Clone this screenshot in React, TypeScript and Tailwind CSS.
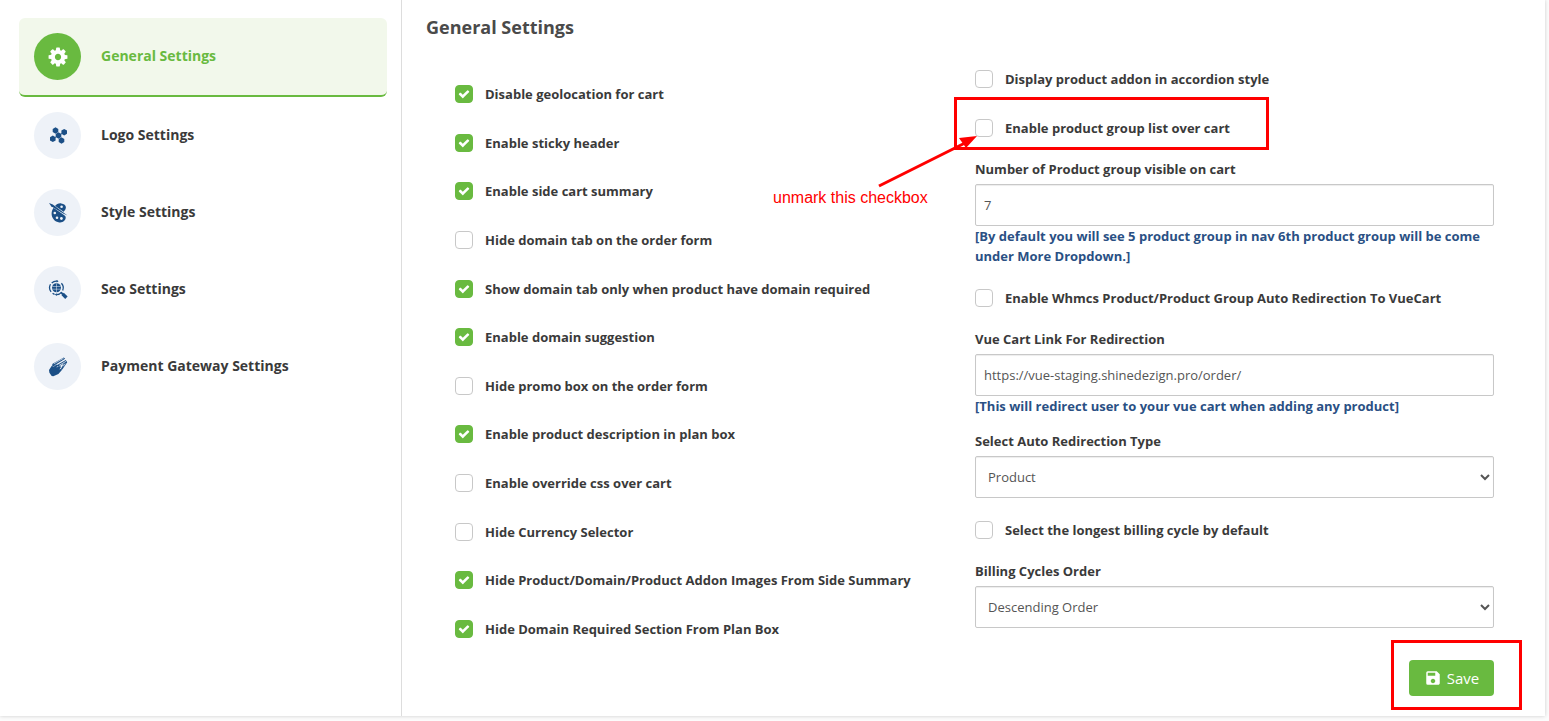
import type { ReactNode } from 'react'
import { useState } from 'react'
import { MdSave } from 'react-icons/md'

const GearIcon = () => (
  <svg className="h-[22px] w-[22px]" viewBox="0 0 1792 1792" fill="currentColor" aria-hidden="true">
    <path d="M1152 896q0-106-75-181t-181-75-181 75-75 181 75 181 181 75 181-75 75-181zm512-109v222q0 12-8 23t-20 13l-185 28q-19 54-39 91 35 50 107 138 10 12 10 25t-9 23q-27 37-99 108t-94 71q-12 0-26-9l-138-108q-44 23-91 38-16 136-29 186-7 28-36 28h-222q-14 0-24.5-8.5t-11.5-21.5l-28-184q-49-16-90-37l-141 107q-10 9-25 9-14 0-25-11-126-114-165-168-7-10-7-23 0-12 8-23 15-21 51-66.5t54-70.5q-27-50-41-99l-183-27q-13-2-21-12.5t-8-23.5v-222q0-12 8-23t19-13l186-28q14-46 39-92-40-57-107-138-10-12-10-24 0-10 9-23 26-36 98.5-107.5t94.5-71.5q13 0 26 10l138 107q44-23 91-38 16-136 29-186 7-28 36-28h222q14 0 24.5 8.500t11.500 21.500l28 184q49 16 90 37l142-107q9-9 24-9 13 0 25 10 129 119 165 170 7 8 7 22 0 12-8 23-15 21-51 66.500t-54 70.500q26 50 41 98l183 28q13 2 21 12.500t8 23.500z" />
  </svg>
)

const MoleculeIcon = () => (
  <svg className="h-5 w-5" viewBox="0 0 20 20" fill="currentColor" aria-hidden="true">
    <path d="M7.5 4.5L13.5 14.5M16.2 6.2L4.8 12.800" stroke="currentColor" strokeWidth="0.8" />
    <path d="M7.500 1.300l2.800 1.600v3.200l-2.800 1.600-2.800-1.600V2.900z" />
    <path d="M16.200 3l2.800 1.600v3.200l-2.800 1.600-2.800-1.600V4.600z" />
    <path d="M10.500 6.300l2.800 1.600v3.200l-2.800 1.600-2.800-1.600V7.900z" />
    <path d="M4.800 9.600l2.800 1.600v3.200L4.800 16 2 14.400v-3.200z" />
    <path d="M13.500 11.300l2.800 1.600v3.200l-2.800 1.600-2.800-1.600v-3.200z" />
  </svg>
)

const PaletteIcon = () => (
  <svg className="h-5 w-5" viewBox="0 0 20 20" fill="currentColor" aria-hidden="true">
    <path d="M13.200.4c-2.600-.3-4.800 1-6.500 3C4.600 5.600 3.500 8 3.600 11c.1 4.200 3.200 7.900 7.700 8.400 3.800.4 6.600-2.100 6.400-5.100-.2-2.400-2.200-3-2.200-4.600s2.300-2.300 2.400-5.100C18 2.300 16 .7 13.200.4z" />
    <g fill="#eef2f8">
      <circle cx="13.600" cy="3.700" r="1.300" />
      <circle cx="6.800" cy="10" r="1.300" />
      <circle cx="9" cy="14.700" r="1.300" />
      <circle cx="13.400" cy="15.500" r="1.400" />
    </g>
    <path d="M4 2.300L18.500 12.300" stroke="#eef2f8" strokeWidth="2.600" />
    <path d="M1 0l3.800 1.400L19.400 12.600l-4.200-2L3.200 3.200z" />
  </svg>
)

const GlobeSearchIcon = () => (
  <svg className="h-5 w-5" viewBox="0 0 20 20" fill="none" stroke="currentColor" aria-hidden="true">
    <circle cx="8.500" cy="7.800" r="4.500" fill="currentColor" stroke="none" />
    <path d="M4.300 6.500h8.400M4.300 9.200h8.400M8.500 3.500v8.600" stroke="#eef2f8" strokeWidth=".5" />
    <path d="M9.500 1.200A6.800 6.800 0 0 0 3.700 3M2.500 4.300a6.800 6.800 0 0 0 .6 7.600M4.600 13.300a6.800 6.800 0 0 0 2 1" strokeWidth="1.300" />
    <path d="M8.300 14.600a6.800 6.800 0 0 0 5.400-2.500M14.700 10.400a6.800 6.800 0 0 0-1.300-7.200" strokeWidth="1.300" />
    <path d="M8.600 0l2 1.300-2 1.300zM8.800 13.300l-2 1.300 2 1.300z" fill="currentColor" stroke="none" />
    <path d="M13 12.300l2 2" strokeWidth="1.800" />
    <path d="M14.600 13.900l3.800 3.900" strokeWidth="3.400" />
  </svg>
)

const PaymentIcon = () => (
  <svg className="h-5 w-5" viewBox="0 0 20 20" fill="currentColor" aria-hidden="true">
    <path d="M4 8.600L4.600 6.800 15.800.4l1.300 1.400-9.300 5.600-2.200 2.200z" />
    <path d="M5.800 6.800l9.800-5.500" stroke="#eef2f8" strokeWidth=".7" />
    <path d="M8.800 8.200l8.900-5.200 1.500 2.200-4.900 7.200-1.300-.6 2.900-5.300-6 3.500z" />
    <path d="M11.200 8.300l6.700-3.900" stroke="#eef2f8" strokeWidth=".8" />
    <path d="M15.200 9.300l1.900-2.800" stroke="#eef2f8" strokeWidth=".7" />
    <path d="M1 13l2.800-4.200 1.800.9 3-2.300 1.100.6-1.200 2.600 3.600-1.500.9.900-1.600 2.500 2.300-.9.200 1.500-3.500 4-5.100 2.200-1.600-.2-2.300-3.300z" />
  </svg>
)

type NavItem = { title: string; icon: ReactNode }

const navItems: NavItem[] = [
  { title: 'General Settings', icon: <GearIcon /> },
  { title: 'Logo Settings', icon: <MoleculeIcon /> },
  { title: 'Style Settings', icon: <PaletteIcon /> },
  { title: 'Seo Settings', icon: <GlobeSearchIcon /> },
  { title: 'Payment Gateway Settings', icon: <PaymentIcon /> },
]

const cartOptions = [
  { id: 'geolocation', label: 'Disable geolocation for cart', checked: true },
  { id: 'sticky-header', label: 'Enable sticky header', checked: true },
  { id: 'side-summary', label: 'Enable side cart summary', checked: true },
  { id: 'domain-tab', label: 'Hide domain tab on the order form', checked: false },
  { id: 'domain-required', label: 'Show domain tab only when product have domain required', checked: true },
  { id: 'domain-suggestion', label: 'Enable domain suggestion', checked: true },
  { id: 'promo-box', label: 'Hide promo box on the order form', checked: false },
  { id: 'plan-description', label: 'Enable product description in plan box', checked: true },
  { id: 'override-css', label: 'Enable override css over cart', checked: false },
  { id: 'currency', label: 'Hide Currency Selector', checked: false },
  { id: 'addon-images', label: 'Hide Product/Domain/Product Addon Images From Side Summary', checked: true },
  { id: 'domain-section', label: 'Hide Domain Required Section From Plan Box', checked: true },
]

const Sidebar = () => {
  const [active, setActive] = useState('General Settings')

  return (
    <nav className="w-[402px] shrink-0 border-r border-[#dddddd] pt-[18px] pr-3.5 pl-[19px]">
      {navItems.map(({ title, icon }) => {
        const isActive = title === active
        return (
          <button
            key={title}
            type="button"
            onClick={() => setActive(title)}
            className={`flex w-full items-center gap-5 rounded-md p-[15px] text-left text-sm font-bold ${
              isActive ? 'border-b-2 border-[#69ba40] bg-[#f2f8eb] text-[#69ba40]' : 'text-[#3a3a3a]'
            }`}
          >
            <span
              className={`flex h-[47px] w-[47px] shrink-0 items-center justify-center rounded-full ${
                isActive ? 'bg-[#69ba40] text-white' : 'bg-[#eef2f8] text-[#1b4f86]'
              }`}
            >
              {icon}
            </span>
            <span className="pb-0.5">{title}</span>
          </button>
        )
      })}
    </nav>
  )
}

type CheckboxProps = { id: string; label: string; checked?: boolean }

const Checkbox = ({ id, label, checked = false }: CheckboxProps) => (
  <div className="flex items-center gap-3">
    <span className="relative h-[18px] w-[18px] shrink-0">
      <input
        id={id}
        type="checkbox"
        defaultChecked={checked}
        className="peer block h-[18px] w-[18px] appearance-none rounded border border-[#c8c8c8] bg-white checked:border-[#69ba40] checked:bg-[#69ba40]"
      />
      <svg
        className="pointer-events-none absolute top-[3px] left-[3px] hidden h-3 w-3 text-white peer-checked:block"
        viewBox="0 0 1792 1792"
        fill="currentColor"
        aria-hidden="true"
      >
        <path d="M1671 566q0 40-28 68l-724 724-136 136q-28 28-68 28t-68-28l-136-136-362-362q-28-28-28-68t28-68l136-136q28-28 68-28t68 28l294 295 656-657q28-28 68-28t68 28l136 136q28 28 28 68z" />
      </svg>
    </span>
    <label htmlFor={id} className="text-[13px] leading-5 font-bold">
      {label}
    </label>
  </div>
)

type FieldProps = { id: string; label: string; hint?: string; children: ReactNode }

const Field = ({ id, label, hint, children }: FieldProps) => (
  <div className="flex flex-col">
    <label htmlFor={id} className="mb-[5px] text-[13px] leading-5 font-bold">
      {label}
    </label>
    {children}
    {hint && <p className="text-[13px] leading-5 font-bold text-[#2a5084]">{hint}</p>}
  </div>
)

const controlClass =
  'h-[42px] w-full rounded-xs border border-[#c8c8c8] bg-white px-2 text-[13px] text-[#555555] shadow-[inset_0_1px_1px_rgba(0,0,0,0.075)]'

const UnmarkNote = () => (
  <div className="pointer-events-none absolute top-0 left-0">
    <div className="absolute -top-1.5 -left-[21px] h-[53px] w-[315px] border-3 border-[#ff0000]" />
    <svg className="absolute top-[31px] -left-[100px] h-[56px] w-[104px]" viewBox="0 0 104 56" aria-hidden="true">
      <path d="M4 52L90 9" stroke="#ff0000" strokeWidth="3" />
      <path d="M102 2L84 4l7 10z" fill="#ff0000" />
    </svg>
    <span className="absolute top-[83px] -left-[202px] font-['Liberation_Sans',Arial,sans-serif] text-base whitespace-nowrap text-[#ff0000]">
      unmark this checkbox
    </span>
  </div>
)

export default function App() {
  return (
    <div className="bg-[#fcfcfc] pr-1 pb-[5px] font-['Open_Sans',sans-serif] text-[#3a3a3a]">
      <div className="flex bg-white shadow-[0_0_4px_rgba(0,0,0,0.2)]">
        <Sidebar />
        <main className="min-w-0 flex-1 pr-[51px] pb-5 pl-6">
          <h1 className="pt-3.5 pb-3.5 text-lg leading-[27px] font-bold text-[#4a4a4a]">General Settings</h1>
          <form onSubmit={(e) => e.preventDefault()}>
            <div className="grid grid-cols-[520fr_519fr] pl-[29px]">
              <div className="grid auto-rows-fr pt-[15px]">
                {cartOptions.map((option) => (
                  <Checkbox key={option.id} {...option} />
                ))}
              </div>

              <div className="flex flex-col gap-[7px] pb-[25px]">
                <div className="grid grid-rows-[48px_49px]">
                  <Checkbox id="accordion" label="Display product addon in accordion style" />
                  <div className="relative grid">
                    <Checkbox id="group-list" label="Enable product group list over cart" />
                    <UnmarkNote />
                  </div>
                </div>

                <Field
                  id="group-count"
                  label="Number of Product group visible on cart"
                  hint="[By default you will see 5 product group in nav 6th product group will be come under More Dropdown.]"
                >
                  <input id="group-count" type="text" defaultValue="7" className={controlClass} />
                </Field>

                <div className="grid h-[49px]">
                  <Checkbox id="auto-redirect" label="Enable Whmcs Product/Product Group Auto Redirection To VueCart" />
                </div>

                <Field
                  id="redirect-link"
                  label="Vue Cart Link For Redirection"
                  hint="[This will redirect user to your vue cart when adding any product]"
                >
                  <input
                    id="redirect-link"
                    type="text"
                    defaultValue="https://vue-staging.shinedezign.pro/order/"
                    className={controlClass}
                  />
                </Field>

                <div className="pt-2">
                  <Field id="redirect-type" label="Select Auto Redirection Type">
                    <select id="redirect-type" className={controlClass}>
                      <option>Product</option>
                      <option>Product Group</option>
                    </select>
                  </Field>
                </div>

                <div className="grid h-[49px]">
                  <Checkbox id="longest-cycle" label="Select the longest billing cycle by default" />
                </div>

                <Field id="cycles-order" label="Billing Cycles Order">
                  <select id="cycles-order" className={controlClass}>
                    <option>Descending Order</option>
                    <option>Ascending Order</option>
                  </select>
                </Field>
              </div>
            </div>

            <div className="flex justify-end pt-[7px]">
              <div className="relative">
                <button
                  type="submit"
                  className="flex h-9 w-[85px] items-center justify-center gap-[5px] rounded bg-[#69ba40] text-[15px] font-medium text-white"
                >
                  <MdSave className="h-[18px] w-[18px]" />
                  Save
                </button>
                <div className="pointer-events-none absolute -top-5 -left-[18px] h-[70px] w-[131px] border-3 border-[#ff0000]" />
              </div>
            </div>
          </form>
        </main>
      </div>
    </div>
  )
}
